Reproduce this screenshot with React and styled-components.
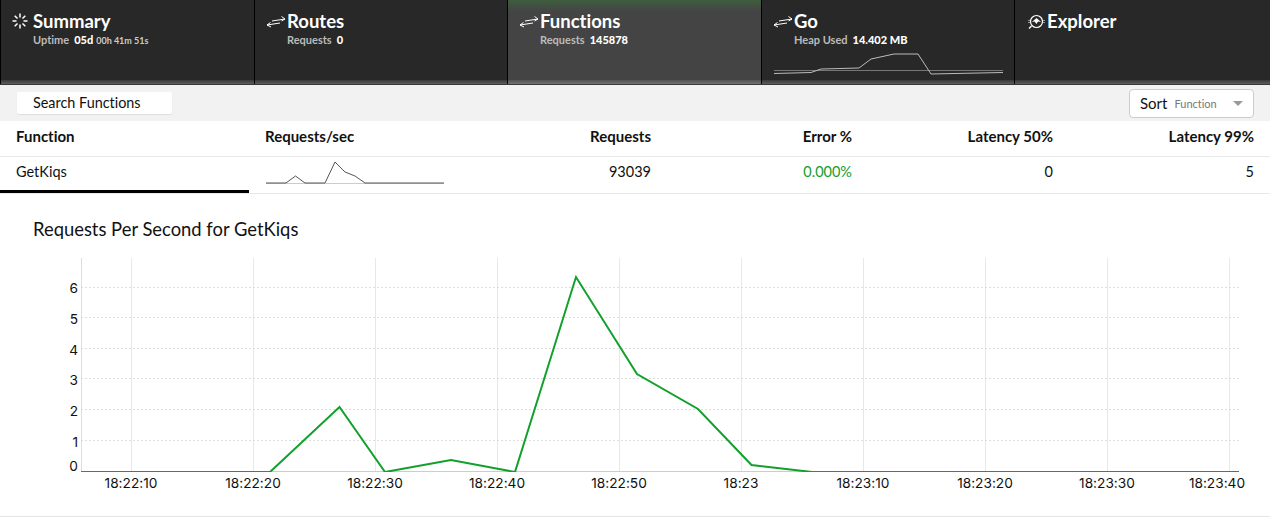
import React from 'react'
import styled, { createGlobalStyle } from 'styled-components'

const GlobalStyle = createGlobalStyle`
    html, body {
        margin: 0;
        padding: 0;
        background: #fff;
        font-family: Lato, "Noto Sans", sans-serif;
        font-variant-ligatures: none;
        color: #111;
    }
`

const Page = styled.div`
    width: 1270px;
    height: 522px;
    overflow: hidden;
    background: #fff;
`

const Header = styled.div`
    display: grid;
    grid-template-columns: 254px 253px 254px 253px 256px;
    height: 84px;
    border-bottom: 1px solid #3a3a3a;
`

const Tab = styled.div`
    position: relative;
    box-sizing: border-box;
    padding: 11px 0 0 32px;
    border-left: 1px solid #000;
    background: ${(p) => (p.$active
        ? 'linear-gradient(#3d5e3d 0, #434b43 8px, #444 12px)'
        : '#282828')};
    &:after {
        content: '';
        position: absolute;
        left: 0;
        right: 0;
        bottom: 0;
        height: 4px;
        background: linear-gradient(rgba(255, 255, 255, 0.08), rgba(255, 255, 255, 0.25));
    }
`

const TabIcon = styled.svg`
    position: absolute;
    left: 11px;
    top: 13px;
    width: 20px;
    height: 16px;
    fill: none;
    stroke: #fff;
    stroke-width: 1;
`

const TabTitle = styled.div`
    font-size: 18.5px;
    line-height: 21px;
    font-weight: 700;
    color: #fff;
`

const TabStat = styled.div`
    margin-top: 1px;
    font-size: 11px;
    line-height: 14px;
    font-weight: 700;
    color: #bbb;
    b {
        color: #fff;
        margin-left: 5px;
    }
    small {
        font-size: 9px;
        margin-left: 3px;
        color: #ccc;
    }
`

const HeapSpark = styled.svg`
    position: absolute;
    left: 0;
    top: 0;
    width: 253px;
    height: 84px;
    fill: none;
`

const Toolbar = styled.div`
    display: flex;
    align-items: center;
    justify-content: space-between;
    height: 36px;
    padding: 0 16px 0 17px;
    background: #f2f2f2;
`

const Search = styled.div`
    box-sizing: border-box;
    width: 155px;
    height: 22px;
    padding-left: 16px;
    background: #fff;
    border-radius: 2px;
    box-shadow: 0 1px 1px rgba(0, 0, 0, 0.08);
    font-size: 14.4px;
    line-height: 22px;
`

const Sort = styled.div`
    display: flex;
    align-items: center;
    box-sizing: border-box;
    width: 125px;
    height: 29px;
    padding: 0 10px;
    background: #fff;
    border: 1px solid #ccc;
    border-radius: 4px;
    font-size: 15px;
`

const SortHint = styled.span`
    flex: 1;
    margin-left: 7px;
    font-size: 11px;
    color: #777;
`

const Caret = styled.span`
    border-left: 5px solid transparent;
    border-right: 5px solid transparent;
    border-top: 5px solid #999;
`

const Row = styled.div`
    display: grid;
    grid-template-columns: 249px repeat(5, 201px);
    height: ${(p) => p.$height}px;
    border-bottom: 1px solid #e8e8e8;
    font-size: ${(p) => (p.$head ? 15 : 14.5)}px;
    font-weight: ${(p) => (p.$head ? 700 : 400)};
`

const Cell = styled.div`
    position: relative;
    display: flex;
    align-items: center;
    box-sizing: border-box;
    justify-content: ${(p) => (p.$right ? 'flex-end' : 'flex-start')};
    padding-left: ${(p) => (p.$right ? 0 : 16)}px;
    padding-bottom: ${(p) => p.$pad}px;
    color: ${(p) => p.$color || '#111'};
    border-bottom: ${(p) => (p.$selected ? '3px solid #000' : 'none')};
`

const RowSpark = styled.svg`
    position: absolute;
    left: 0;
    top: 0;
    width: 201px;
    height: 36px;
    fill: none;
`

const ChartPanel = styled.div`
    height: 322px;
    border-bottom: 1px solid #e6e6e6;
`

const ChartTitle = styled.h2`
    margin: 0;
    padding: 25px 0 0 33px;
    font-size: 18.4px;
    line-height: 21px;
    font-weight: 400;
`

const Chart = styled.svg`
    display: block;
    margin-top: 18px;
    width: 1270px;
    height: 258px;
    font-family: Inter, sans-serif;
    font-size: 13.7px;
    fill: #111;
`

const rays = [0, 45, 90, 135, 180, 225, 270, 315]

function SummaryIcon() {
    return (
        <TabIcon viewBox="0 0 20 16">
            {rays.map((a) => (
                <line key={a} x1="8" y1="0.5" x2="8" y2="4.5" strokeWidth="1.5" transform={`rotate(${a} 8 8)`} />
            ))}
        </TabIcon>
    )
}

function ArrowsIcon() {
    return (
        <TabIcon viewBox="0 0 20 16">
            <path d="M6 8 L19 6 M15.5 3.5 L19 6 L15.5 8" />
            <path d="M1 12 L14 10 M4.5 9.5 L1 12 L5 14" />
        </TabIcon>
    )
}

function ExplorerIcon() {
    return (
        <TabIcon viewBox="0 0 20 16">
            <circle cx="10.5" cy="8.5" r="6" strokeWidth="1.2" />
            <path d="M6 9 L10.5 5 L15 9 L12 8.5 L10.5 11 L8.5 8.5 Z" fill="#fff" stroke="none" />
            <path d="M5.5 13 L3 15.5" strokeWidth="1.4" />
            <path d="M18 7 L18 10" strokeDasharray="1 1" />
            <path d="M3 7 L3 10" strokeDasharray="1 1" />
        </TabIcon>
    )
}

const yTicks = [
    { label: '6', grid: 287, text: 288 },
    { label: '5', grid: 317, text: 319 },
    { label: '4', grid: 348, text: 350 },
    { label: '3', grid: 378, text: 380 },
    { label: '2', grid: 409, text: 411 },
    { label: '1', grid: 440, text: 442 },
    { label: '0', grid: null, text: 466 },
]

// the last label is pulled in so it stays inside the plot
const xTicks = [
    { label: '18:22:10', x: 131 },
    { label: '18:22:20', x: 253 },
    { label: '18:22:30', x: 375 },
    { label: '18:22:40', x: 497 },
    { label: '18:22:50', x: 619 },
    { label: '18:23', x: 741 },
    { label: '18:23:10', x: 863 },
    { label: '18:23:20', x: 985 },
    { label: '18:23:30', x: 1107 },
    { label: '18:23:40', x: 1229, textX: 1217 },
]

const series = '81,472 270,472 339.5,407 385,472 451,460 515,472 576,277 637,374 698,409 751.5,465 812,472 1239,472'

function RequestsChart() {
    // chart coordinates are page coordinates, the svg starts at y=258
    return (
        <Chart viewBox="0 258 1270 258">
            <defs>
                <clipPath id="plot">
                    <rect x="81" y="258" width="1158" height="214" />
                </clipPath>
            </defs>
            <line x1="81.5" y1="258" x2="81.5" y2="471" stroke="#ddd" />
            {xTicks.map((t) => (
                <line key={t.x} x1={t.x + 0.5} y1="258" x2={t.x + 0.5} y2="471" stroke="#e8e8e8" />
            ))}
            {yTicks.filter((t) => t.grid).map((t) => (
                <line key={t.label} x1="81" y1={t.grid + 0.5} x2="1239" y2={t.grid + 0.5} stroke="#ddd" strokeDasharray="2 2" />
            ))}
            <line x1="81" y1="471.5" x2="1239" y2="471.5" stroke="#ccc" />
            <polyline points={series} fill="none" stroke="#12a02c" strokeWidth="2" clipPath="url(#plot)" />
            {yTicks.map((t) => (
                <text key={t.label} x="78" y={t.text} dy="0.35em" textAnchor="end">{t.label}</text>
            ))}
            {xTicks.map((t) => (
                <text key={t.label} x={t.textX || t.x} y="483" dy="0.35em" textAnchor="middle">{t.label}</text>
            ))}
        </Chart>
    )
}

export default function App() {
    return (
        <Page>
            <GlobalStyle />
            <Header>
                <Tab>
                    <SummaryIcon />
                    <TabTitle>Summary</TabTitle>
                    <TabStat>Uptime<b>05d</b><small>00h 41m 51s</small></TabStat>
                </Tab>
                <Tab>
                    <ArrowsIcon />
                    <TabTitle>Routes</TabTitle>
                    <TabStat>Requests<b>0</b></TabStat>
                </Tab>
                <Tab $active>
                    <ArrowsIcon />
                    <TabTitle>Functions</TabTitle>
                    <TabStat>Requests<b>145878</b></TabStat>
                </Tab>
                <Tab>
                    <ArrowsIcon />
                    <TabTitle>Go</TabTitle>
                    <TabStat>Heap Used<b>14.402 MB</b></TabStat>
                    <HeapSpark viewBox="761 0 253 84">
                        <line x1="773" y1="70.5" x2="1002" y2="70.5" stroke="#777" />
                        <polyline points="773,73.5 810,72.5 820,69 858,68 870,59 893,54 917,54 930,74 1002,72.5" stroke="#bbb" />
                    </HeapSpark>
                </Tab>
                <Tab>
                    <ExplorerIcon />
                    <TabTitle>Explorer</TabTitle>
                </Tab>
            </Header>
            <Toolbar>
                <Search>Search Functions</Search>
                <Sort>
                    Sort
                    <SortHint>Function</SortHint>
                    <Caret />
                </Sort>
            </Toolbar>
            <Row $head $height={35}>
                <Cell $pad={6}>Function</Cell>
                <Cell $pad={6}>Requests/sec</Cell>
                <Cell $pad={6} $right>Requests</Cell>
                <Cell $pad={6} $right>Error %</Cell>
                <Cell $pad={6} $right>Latency 50%</Cell>
                <Cell $pad={6} $right>Latency 99%</Cell>
            </Row>
            <Row $height={36}>
                <Cell $pad={5} $selected>GetKiqs</Cell>
                <Cell $pad={8}>
                    <RowSpark viewBox="249 157 201 36">
                        <line x1="266" y1="183.5" x2="444" y2="183.5" stroke="#ccc" />
                        <polyline points="266,183 286,183 295.5,176 305,183 325,183 335,162 345,172 355,176 365,183 444,183" stroke="#555" />
                    </RowSpark>
                </Cell>
                <Cell $pad={8} $right>93039</Cell>
                <Cell $pad={8} $right $color="#12a02c">0.000%</Cell>
                <Cell $pad={8} $right>0</Cell>
                <Cell $pad={8} $right>5</Cell>
            </Row>
            <ChartPanel>
                <ChartTitle>Requests Per Second for GetKiqs</ChartTitle>
                <RequestsChart />
            </ChartPanel>
        </Page>
    )
}
